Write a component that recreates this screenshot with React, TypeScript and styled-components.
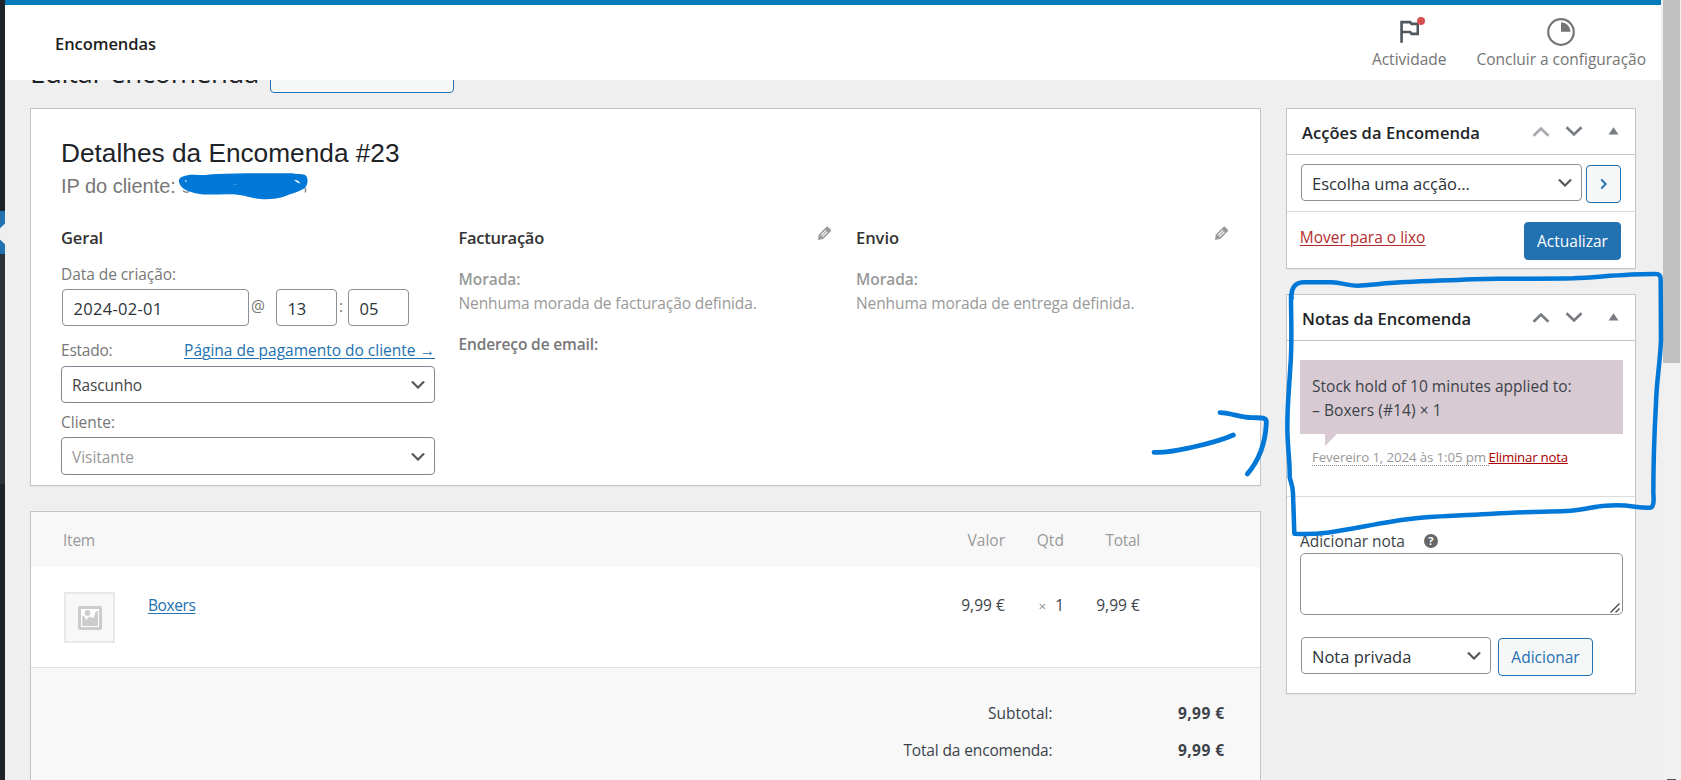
import React from 'react';
import styled, { createGlobalStyle, css } from 'styled-components';

const ui = '"Open Sans", "Noto Sans", sans-serif';

const GlobalStyle = createGlobalStyle`
  *, *::before, *::after { box-sizing: border-box; }
  body {
    margin: 0;
    background: #efefef;
    font: 400 15.5px/24px ${ui};
    color: #3c434a;
  }
  h1, h2, h3, p { margin: 0; }
  svg { display: block; flex: none; }
`;

interface TextProps {
  $ls?: number;
}

const spacing = css<TextProps>`
  letter-spacing: ${({ $ls = 0 }) => $ls}px;
  white-space: nowrap;
`;

/* ---------- shell ---------- */

const Shell = styled.div`
  position: relative;
  display: flex;
  width: 1681px;
  height: 780px;
  overflow: hidden;
`;

const MenuEdge = styled.div`
  display: flex;
  flex-direction: column;
  flex: none;
  width: 5px;
  background: #1d2327;
`;

const MenuCurrent = styled.div`
  margin-top: 211px;
  height: 43px;
  background: #2271b1;
`;

const SubMenu = styled.div`
  height: 230px;
  background: #2c3338;
`;

const Main = styled.main`
  flex: none;
  width: 1658px;
`;

const Scrollbar = styled.div`
  display: flex;
  flex-direction: column;
  justify-content: space-between;
  align-items: center;
  flex: none;
  width: 17px;
  background: #f1f1f1;
`;

const Thumb = styled.div`
  width: 100%;
  height: 363px;
  background: #c1c1c1;
`;

const ScrollArrow = styled.div`
  width: 9px;
  height: 1px;
  background: #505050;
`;

/* ---------- header ---------- */

const Header = styled.header`
  display: flex;
  justify-content: space-between;
  width: 1656px;
  height: 80px;
  padding: 0 15px 0 50px;
  border-top: 5px solid #007cba;
  background: #fff;
`;

const HeaderTitle = styled.h1<TextProps>`
  padding-top: 2px;
  font-size: 16.5px;
  font-weight: 600;
  line-height: 74px;
  color: #1e1e1e;
  ${spacing}
`;

const HeaderTools = styled.div`
  display: flex;
  gap: 30px;
`;

const Tool = styled.div<TextProps>`
  display: flex;
  flex-direction: column;
  align-items: center;
  color: #757575;
  ${spacing}
`;

const ToolIcon = styled.div`
  position: relative;
  height: 42px;
  padding-top: 9px;
`;

const UnreadDot = styled.span`
  position: absolute;
  top: 12px;
  right: -1px;
  width: 8px;
  height: 8px;
  border-radius: 50%;
  background: #d94f4f;
`;

const TitleStrip = styled.div`
  display: flex;
  gap: 10px;
  height: 28px;
  padding-left: 25px;
  overflow: hidden;
`;

const PageTitle = styled.h1<TextProps>`
  width: 230px;
  margin-top: -25px;
  font-size: 27.5px;
  font-weight: 400;
  line-height: 36px;
  color: #1d2327;
  ${spacing}
`;

const AddNew = styled.div`
  width: 184px;
  height: 38px;
  margin-top: -25px;
  border: 1px solid #2271b1;
  border-radius: 4px;
  background: #f6f7f7;
`;

/* ---------- panels ---------- */

const Columns = styled.div`
  display: grid;
  grid-template-columns: 1231px 350px;
  gap: 25px;
  padding-left: 25px;
`;

const Stack = styled.div`
  display: flex;
  flex-direction: column;
  gap: 25px;
`;

const Panel = styled.section`
  border: 1px solid #c3c4c7;
  background: #fff;
  box-shadow: 0 1px 1px rgba(0, 0, 0, 0.04);
`;

const OrderPanel = styled(Panel)`
  height: 378px;
  padding: 28px 0 0 30px;
`;

const OrderTitle = styled.h2<TextProps>`
  font: 400 26.25px/32px 'Liberation Sans', Arial, sans-serif;
  color: #1d2327;
  ${spacing}
`;

const OrderMeta = styled.p<TextProps>`
  margin-top: 3px;
  font: 400 20px/28px 'Liberation Sans', Arial, sans-serif;
  color: #777;
  ${spacing}
`;

const DataColumns = styled.div`
  display: grid;
  grid-template-columns: repeat(3, 397.5px);
  padding-top: 26px;
`;

const DataColumn = styled.div`
  width: 374px;
`;

const ColumnHead = styled.div`
  display: flex;
  justify-content: space-between;
  width: 372px;
`;

const ColumnTitle = styled.h3<TextProps>`
  font-size: 16.5px;
  font-weight: 600;
  line-height: 24px;
  color: #333;
  ${spacing}
`;

const FieldLabel = styled.div<TextProps & { $top: number; $bottom: number }>`
  display: flex;
  justify-content: space-between;
  padding: ${({ $top, $bottom }) => `${$top}px 0 ${$bottom}px`};
  color: #777;
  ${spacing}
`;

const Link = styled.a<TextProps>`
  color: #2271b1;
  text-decoration: underline;
  text-decoration-thickness: 1px;
  text-underline-offset: 2px;
  ${spacing}
`;

const DateRow = styled.div`
  display: flex;
  padding-left: 1px;
  color: #777;
`;

const Input = styled.div<TextProps & { $width: number }>`
  width: ${({ $width }) => $width}px;
  height: 37px;
  padding: 1px 0 0 10.5px;
  border: 1px solid #8c8f94;
  border-radius: 4px;
  font-size: 16.5px;
  line-height: 35px;
  color: #2c3338;
  ${spacing}
`;

const Separator = styled.span<{ $width: number }>`
  width: ${({ $width }) => $width}px;
  padding-left: 2px;
  line-height: 35px;
`;

const SelectBox = styled.div<
  TextProps & { $width: number; $height?: number; $small?: boolean; $muted?: boolean }
>`
  display: flex;
  align-items: center;
  justify-content: space-between;
  flex: none;
  width: ${({ $width }) => $width}px;
  height: ${({ $height = 37 }) => $height}px;
  padding: 0 6px 0 10px;
  border: 1px solid ${({ $small }) => ($small ? '#7e8993' : '#8c8f94')};
  border-radius: 4px;
  background: #fff;
  font-size: ${({ $small }) => ($small ? 15.5 : 16.5)}px;
  color: ${({ $small, $muted }) => ($muted ? '#999' : $small ? '#444' : '#2c3338')};
  ${spacing}

  span { padding-top: ${({ $small }) => ($small ? 1 : 3)}px; }
  svg { margin-top: 1px; }
`;

const Address = styled.p<{ $top: number; $dark?: boolean }>`
  margin-top: ${({ $top }) => $top}px;
  color: ${({ $dark }) => ($dark ? '#777' : '#999')};
`;

const AddressLabel = styled.strong<TextProps>`
  display: block;
  font-weight: 600;
  ${spacing}
`;

const AddressText = styled.span<TextProps>`
  ${spacing}
`;

/* ---------- order items ---------- */

const ItemsPanel = styled(Panel)`
  height: 290px;
  background: #f8f8f8;
`;

const ItemRow = styled.div<{ $head?: boolean }>`
  display: grid;
  grid-template-columns: 84px 1fr 100px 59px 76px;
  height: ${({ $head }) => ($head ? 55 : 100)}px;
  padding: ${({ $head }) => ($head ? 16 : 25)}px 120px 0 ${({ $head }) => ($head ? 32 : 33)}px;
  background: ${({ $head }) => ($head ? '#f8f8f8' : '#fff')};
  color: ${({ $head }) => ($head ? '#999' : '#3c434a')};
`;

const Cell = styled.div<TextProps & { $right?: boolean; $drop?: boolean }>`
  padding-top: ${({ $drop }) => ($drop ? 1 : 0)}px;
  text-align: ${({ $right }) => ($right ? 'right' : 'left')};
  ${spacing}
`;

const Times = styled.small`
  margin-right: 9px;
  font-size: 13.5px;
  color: #888;
`;

const Thumbnail = styled.div`
  display: grid;
  place-items: center;
  width: 51px;
  height: 51px;
  border: 2px solid #e8e8e8;
  background: #f8f8f8;
`;

const Totals = styled.div`
  display: grid;
  grid-template-columns: 1fr 172px;
  row-gap: 13px;
  padding: 33px 35.5px 0 0;
  border-top: 1px solid #dfdfdf;
  text-align: right;
`;

const TotalLabel = styled.span<TextProps>`
  ${spacing}
`;

const TotalValue = styled.strong<TextProps>`
  font-weight: 700;
  ${spacing}
`;

/* ---------- side boxes ---------- */

const BoxHead = styled.div`
  display: flex;
  align-items: center;
  justify-content: space-between;
  height: 46px;
  padding: 0 16px 0 15px;
  border-bottom: 1px solid #c3c4c7;
`;

const BoxTitle = styled.h2<TextProps>`
  padding-top: 2px;
  font-size: 16.5px;
  font-weight: 600;
  line-height: 24px;
  color: #1d2327;
  ${spacing}
`;

const BoxHandles = styled.div`
  display: flex;
  align-items: center;
  color: #787c82;
`;

const Handle = styled.svg<{ $faded?: boolean; $gap: number }>`
  margin-left: ${({ $gap }) => $gap}px;
  opacity: ${({ $faded }) => ($faded ? 0.65 : 1)};
`;

const ActionRow = styled.div`
  display: flex;
  gap: 4px;
  height: 57px;
  padding: 9px 0 0 14px;
  border-bottom: 1px solid #dcdcde;
`;

const Button = styled.button<TextProps & { $width: number; $primary?: boolean }>`
  display: flex;
  align-items: center;
  justify-content: center;
  width: ${({ $width }) => $width}px;
  height: 38px;
  margin: ${({ $primary }) => ($primary ? 0 : 1)}px 0 0;
  padding: 0;
  border: 1px solid #2271b1;
  border-radius: 4px;
  background: ${({ $primary }) => ($primary ? '#2271b1' : '#f6f7f7')};
  color: ${({ $primary }) => ($primary ? '#fff' : '#2271b1')};
  font: 400 15.5px/24px ${ui};
  ${spacing}
`;

const BoxFoot = styled.div`
  display: flex;
  justify-content: space-between;
  height: 56px;
  padding: 10px 14px 0 12.7px;
`;

const TrashLink = styled(Link)`
  padding-top: 3px;
  color: #b32d2e;
`;

const NoteList = styled.div`
  height: 156px;
  padding: 19px 12px 0 13px;
  border-bottom: 1px solid #dcdcde;
`;

const NoteBubble = styled.div`
  position: relative;
  height: 74px;
  padding: 14px 12px 0;
  background: #d7cad2;

  &::after {
    content: '';
    position: absolute;
    top: 74px;
    left: 25px;
    border-style: solid;
    border-width: 12px 12px 0 0;
    border-color: #d7cad2 transparent;
  }
`;

const NoteLine = styled.p<TextProps>`
  ${spacing}
`;

const NoteMeta = styled.p`
  display: flex;
  padding: 15px 0 0 12px;
  font-size: 13.3px;
  line-height: 16px;
  color: #999;
`;

const NoteDate = styled.abbr<TextProps>`
  width: 176.5px;
  height: 17px;
  border-bottom: 1px dotted #888;
  ${spacing}
`;

const DeleteNote = styled(Link)`
  color: #a00;
  text-underline-offset: 1px;
`;

const AddNote = styled.div`
  height: 196px;
  padding: 32px 12px 0 13px;
`;

const AddNoteLabel = styled.label<TextProps>`
  display: flex;
  align-items: center;
  gap: 19px;
  ${spacing}
`;

const Help = styled.span`
  width: 14px;
  height: 14px;
  border-radius: 50%;
  background: #666;
  color: #fff;
  font-size: 11px;
  font-weight: 700;
  line-height: 14px;
  text-align: center;
`;

const NoteArea = styled.div`
  display: flex;
  justify-content: flex-end;
  align-items: flex-end;
  height: 62px;
  padding: 0 2px 1px 0;
  border: 1px solid #8c8f94;
  border-radius: 5px;
`;

const NoteControls = styled.div`
  display: flex;
  gap: 7px;
  padding: 22px 0 0 1px;
`;

const Annotations = styled.svg`
  position: absolute;
  inset: 0;
  pointer-events: none;
`;

/* ---------- icons ---------- */

const SelectArrow = () => (
  <svg width="20" height="20" viewBox="0 0 20 20">
    <path d="M5 6l5 5 5-5 2 1-7 7-7-7 2-1z" fill="#555" />
  </svg>
);

const Pencil = () => (
  <svg width="13" height="14" viewBox="3 2.2 14 15">
    <path
      fill="#999"
      stroke="#999"
      strokeWidth="0.5"
      d="M13.89 3.39l2.71 2.72c.46.46.42 1.24.03 1.64l-8.01 8.02-5.56 1.16 1.16-5.58s7.6-7.63 7.99-8.03c.39-.39 1.22-.39 1.68.07zm-2.73 2.79l-5.59 5.61 1.11 1.11 5.54-5.65zm-2.97 8.23l5.58-5.6-1.07-1.08-5.59 5.6z"
    />
  </svg>
);

const Flag = () => (
  <svg width="30" height="30" viewBox="0 -.4 24 24">
    <path
      fill="#50575e"
      d="M14.6 6.4L13.4 5H5v17.6h2.100V15h5.300l1.200 1.500H20V6.400zM18 14.400h-3.400L13.400 13H7.100V7.100h5.300l1.200 1.400H18z"
    />
  </svg>
);

const Progress = () => (
  <svg width="28" height="28" viewBox="0 0 28 28">
    <circle cx="14" cy="14" r="12.8" fill="none" stroke="#757575" strokeWidth="2.200" />
    <path d="M14 4.200a9.500 9.500 0 0 1 9.500 9.500H14z" fill="#757575" />
  </svg>
);

const Placeholder = () => (
  <svg width="24" height="24" viewBox="0 0 24 24">
    <rect x="1.5" y="1.5" width="21" height="21" rx="0.5" fill="#fff" stroke="#ccc" strokeWidth="3" />
    <circle cx="9.5" cy="6.9" r="2.8" fill="#ccc" />
    <path d="M4.200 9.500L5.800 10l2.500 4 3-3.500 2.600 1 1.800.300 1.800-5.800L20 4.500V20H4.200z" fill="#ccc" />
  </svg>
);

const Handles = ({ first }: { first?: boolean }) => (
  <BoxHandles>
    <Handle $gap={0} $faded={first} width="18" height="11" viewBox="0 0 18 11">
      <path d="M1.500 9.700L9 2.500l7.500 7.200" fill="none" stroke="currentColor" strokeWidth="2.7" />
    </Handle>
    <Handle $gap={15} width="18" height="11" viewBox="0 0 18 11">
      <path d="M1.500 1.300L9 8.500l7.500-7.200" fill="none" stroke="currentColor" strokeWidth="2.7" />
    </Handle>
    <Handle $gap={25} width="11" height="9" viewBox="0 0 11 9">
      <path d="M.500 7.500L5.500.300l5 7.200z" fill="currentColor" />
    </Handle>
  </BoxHandles>
);

const Ink = () => (
  <Annotations width="1681" height="780" viewBox="0 0 1681 780">
    <path d="M5 223.500L0 228.200v11.300l5 4.700z" fill="#efefef" />
    <path d="M183 190.500q3 3 6 1M305.500 188v4.500" fill="none" stroke="#888" strokeWidth="1.5" />
    <g transform="translate(170 165) scale(.33333)">
      <path
        fill="#0078d7"
        d="M27 50C24 36 45 28 75 29C100 32 120 28 140 27C220 24 300 25 368 25C378 29 400 25 408 32C416 42 413 62 404 70C385 82 365 85 345 94C320 104 280 105 255 100C235 97 220 90 185 88C150 87 110 91 85 86C60 82 30 72 27 50z"
      />
      <path d="M43 47l6-1 1 6zM371 44l10 2 8 6 1 4-10-5z" fill="#fff" />
      <path d="M190 57h11v2h-11z" fill="#4d9fe3" />
    </g>
    <g fill="none" stroke="#0078d7" strokeLinecap="round" strokeLinejoin="round">
      <g transform="translate(1130 390) scale(.33333)" strokeWidth="14.5">
        <path d="M72 187C120 189 150 180 190 171C235 161 275 151 310 135" />
        <path d="M270 68C305 70 335 82 365 83C390 84 410 80 409 97C407 150 392 205 352 252" />
      </g>
      <g transform="translate(1260 260) scale(.33333)" strokeWidth="13.5">
        <path d="M95 115C92 85 105 68 130 67L215 67C245 69 270 77 293 77C330 76 380 68 440 66C530 63 620 57 710 56C800 56 870 57 940 55C1030 50 1110 41 1185 42Q1203 40 1202 60L1203 240C1200 310 1190 360 1188 430C1183 520 1180 600 1180 700Q1184 743 1170 743C1130 744 1120 736 1070 736C1000 736 970 752 920 753C830 756 770 757 700 761C610 766 520 768 455 776C370 785 280 808 200 818Q150 824 103 821L99 700C98 670 92 670 89 650C90 600 82 560 82 500C82 430 88 380 91 320C97 250 93 180 93 105" />
      </g>
    </g>
  </Annotations>
);

/* ---------- page ---------- */

export default function App() {
  return (
    <Shell>
      <GlobalStyle />
      <MenuEdge>
        <MenuCurrent />
        <SubMenu />
      </MenuEdge>

      <Main>
        <Header>
          <HeaderTitle $ls={-0.06}>Encomendas</HeaderTitle>
          <HeaderTools>
            <Tool>
              <ToolIcon>
                <Flag />
                <UnreadDot />
              </ToolIcon>
              Actividade
            </Tool>
            <Tool $ls={-0.02}>
              <ToolIcon>
                <svg width="28" height="4" />
                <Progress />
              </ToolIcon>
              Concluir a configuração
            </Tool>
          </HeaderTools>
        </Header>

        <TitleStrip>
          <PageTitle $ls={-0.34}>Editar encomenda</PageTitle>
          <AddNew />
        </TitleStrip>

        <Columns>
          <Stack>
            <OrderPanel>
              <OrderTitle>Detalhes da Encomenda #23</OrderTitle>
              <OrderMeta $ls={-0.03}>IP do cliente:</OrderMeta>
              <DataColumns>
                <DataColumn>
                  <ColumnTitle $ls={-0.15}>Geral</ColumnTitle>
                  <FieldLabel $top={12} $bottom={3} $ls={-0.06}>Data de criação:</FieldLabel>
                  <DateRow>
                    <Input $width={187} $ls={0.29}>2024-02-01</Input>
                    <Separator $width={27}>@</Separator>
                    <Input $width={61} $ls={-0.2}>13</Input>
                    <Separator $width={11}>:</Separator>
                    <Input $width={61}>05</Input>
                  </DateRow>
                  <FieldLabel $top={12} $bottom={4} $ls={-0.22}>
                    Estado:
                    <Link $ls={-0.01}>Página de pagamento do cliente →</Link>
                  </FieldLabel>
                  <SelectBox $small $width={374} $ls={-0.1}>
                    <span>Rascunho</span>
                    <SelectArrow />
                  </SelectBox>
                  <FieldLabel $top={7} $bottom={3}>Cliente:</FieldLabel>
                  <SelectBox $small $muted $width={374} $height={38} $ls={-0.04}>
                    <span>Visitante</span>
                    <SelectArrow />
                  </SelectBox>
                </DataColumn>

                <DataColumn>
                  <ColumnHead>
                    <ColumnTitle $ls={-0.26}>Facturação</ColumnTitle>
                    <Pencil />
                  </ColumnHead>
                  <Address $top={17}>
                    <AddressLabel $ls={-0.04}>Morada:</AddressLabel>
                    <AddressText $ls={-0.11}>Nenhuma morada de facturação definida.</AddressText>
                  </Address>
                  <Address $top={17} $dark>
                    <AddressLabel $ls={-0.14}>Endereço de email:</AddressLabel>
                  </Address>
                </DataColumn>

                <DataColumn>
                  <ColumnHead>
                    <ColumnTitle $ls={-0.04}>Envio</ColumnTitle>
                    <Pencil />
                  </ColumnHead>
                  <Address $top={17}>
                    <AddressLabel $ls={-0.04}>Morada:</AddressLabel>
                    <AddressText $ls={-0.09}>Nenhuma morada de entrega definida.</AddressText>
                  </Address>
                </DataColumn>
              </DataColumns>
            </OrderPanel>

            <ItemsPanel>
              <ItemRow $head>
                <Cell $ls={-0.23}>Item</Cell>
                <Cell />
                <Cell $right>Valor</Cell>
                <Cell $right $ls={0.1}>Qtd</Cell>
                <Cell $right $ls={-0.28}>Total</Cell>
              </ItemRow>
              <ItemRow>
                <Thumbnail>
                  <Placeholder />
                </Thumbnail>
                <Cell $drop>
                  <Link $ls={-0.4}>Boxers</Link>
                </Cell>
                <Cell $right $drop $ls={0.05}>9,99 €</Cell>
                <Cell $right $drop>
                  <Times>×</Times>1
                </Cell>
                <Cell $right $drop $ls={0.05}>9,99 €</Cell>
              </ItemRow>
              <Totals>
                <TotalLabel>Subtotal:</TotalLabel>
                <TotalValue $ls={0.45}>9,99 €</TotalValue>
                <TotalLabel $ls={-0.14}>Total da encomenda:</TotalLabel>
                <TotalValue $ls={0.45}>9,99 €</TotalValue>
              </Totals>
            </ItemsPanel>
          </Stack>

          <Stack>
            <Panel>
              <BoxHead>
                <BoxTitle $ls={0.06}>Acções da Encomenda</BoxTitle>
                <Handles first />
              </BoxHead>
              <ActionRow>
                <SelectBox $width={281} $ls={-0.03}>
                  <span>Escolha uma acção...</span>
                  <SelectArrow />
                </SelectBox>
                <Button $width={35}>
                  <svg width="8" height="12" viewBox="0 0 8 12">
                    <path d="M1.200 1.500L5.800 6l-4.600 4.500" fill="none" stroke="#2271b1" strokeWidth="1.8" />
                  </svg>
                </Button>
              </ActionRow>
              <BoxFoot>
                <TrashLink>Mover para o lixo</TrashLink>
                <Button $primary $width={97}>Actualizar</Button>
              </BoxFoot>
            </Panel>

            <Panel>
              <BoxHead>
                <BoxTitle>Notas da Encomenda</BoxTitle>
                <Handles />
              </BoxHead>
              <NoteList>
                <NoteBubble>
                  <NoteLine $ls={0.02}>Stock hold of 10 minutes applied to:</NoteLine>
                  <NoteLine $ls={0.07}>– Boxers (#14) × 1</NoteLine>
                </NoteBubble>
                <NoteMeta>
                  <NoteDate $ls={-0.12}>Fevereiro 1, 2024 às 1:05 pm</NoteDate>
                  <DeleteNote $ls={-0.24}>Eliminar nota</DeleteNote>
                </NoteMeta>
              </NoteList>
              <AddNote>
                <AddNoteLabel $ls={-0.03}>
                  Adicionar nota
                  <Help>?</Help>
                </AddNoteLabel>
                <NoteArea>
                  <svg width="10" height="10" viewBox="0 0 10 10">
                    <path d="M.500 9.500l9-9M5.500 9.500l4-4" stroke="#444" strokeWidth="1.3" />
                  </svg>
                </NoteArea>
                <NoteControls>
                  <SelectBox $width={190}>
                    <span>Nota privada</span>
                    <SelectArrow />
                  </SelectBox>
                  <Button $width={95}>Adicionar</Button>
                </NoteControls>
              </AddNote>
            </Panel>
          </Stack>
        </Columns>
      </Main>

      <Scrollbar>
        <Thumb />
        <ScrollArrow />
      </Scrollbar>
      <Ink />
    </Shell>
  );
}
